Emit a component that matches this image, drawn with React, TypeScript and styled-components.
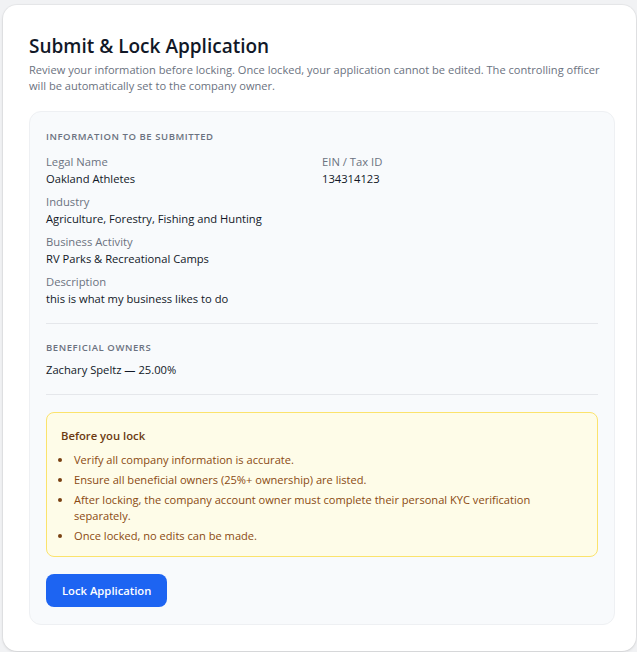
import React from 'react'
import styled, { createGlobalStyle } from 'styled-components'

const GlobalStyle = createGlobalStyle`
  html, body { margin: 0; padding: 0; background: #f1f2f4; }
  body { font-family: "Open Sans", "Noto Sans", Arial, sans-serif; color: #111827; }
  * { box-sizing: border-box; }
`

const Page = styled.div`
  padding: 5px 1px 2px 3px;
`

const Card = styled.section`
  background: #fff;
  border-radius: 14px;
  box-shadow: 0 1px 3px rgba(0,0,0,0.12), 0 0 0 1px rgba(0,0,0,0.03);
  padding: 27px 21px 25px 26px;
  min-height: 646px;
`

const Title = styled.h1`
  margin: 0;
  font-size: 19px;
  line-height: 28px;
  font-weight: 600;
  color: #111827;
`

const Subtitle = styled.p`
  margin: 2px 0 17px;
  font-size: 11.1px;
  line-height: 16px;
  color: #6b7280;
`

const Panel = styled.div`
  background: #f8fafc;
  border: 1px solid #eef0f3;
  border-radius: 12px;
  padding: 18px 16px 17px;
`

const SectionLabel = styled.div<{ $gap?: number }>`
  font-size: 9.5px;
  line-height: 14px;
  font-weight: 600;
  letter-spacing: 0.06em;
  text-transform: uppercase;
  color: #6b7280;
  margin-bottom: ${(p) => p.$gap ?? 9}px;
`

const FieldGrid = styled.div`
  display: grid;
  grid-template-columns: 1fr 1fr;
  row-gap: 6px;
`

const Field = styled.div<{ $wide?: boolean }>`
  grid-column: ${(p) => (p.$wide ? '1 / -1' : 'auto')};
`

const FieldLabel = styled.div`
  font-size: 11.25px;
  line-height: 17px;
  color: #6b7280;
`

const FieldValue = styled.div`
  font-size: 11.2px;
  line-height: 17px;
  color: #111827;
`

const Divider = styled.hr`
  border: none;
  border-top: 1px solid #e5e7eb;
  margin: 16px 0 17px;
`

const OwnerRow = styled.div`
  font-size: 11.2px;
  line-height: 17px;
  color: #111827;
`

const Notice = styled.div`
  background: #fefce8;
  border: 1px solid #fbe36c;
  border-radius: 8px;
  padding: 14px 14px 12px;
  margin-top: 17px;
`

const NoticeTitle = styled.div`
  font-size: 11.25px;
  line-height: 17px;
  font-weight: 600;
  color: #6b3a12;
  margin-bottom: 8px;
`

const NoticeList = styled.ul`
  margin: 0 0 0 -3px;
  padding: 0;
  list-style: none;
  font-size: 11.1px;
  line-height: 16px;
  color: #8a4a12;
`

const NoticeItem = styled.li`
  display: flex;
  margin-bottom: 4px;

  &:last-child { margin-bottom: 0; }

  &::before {
    content: '';
    flex: none;
    width: 4px;
    height: 4px;
    margin: 6px 12px 0 0;
    border-radius: 50%;
    background: #7a4212;
  }
`

const LockButton = styled.button`
  margin-top: 17px;
  height: 33px;
  padding: 0 16px;
  border: none;
  border-radius: 8px;
  background: #1d64f2;
  color: #fff;
  font-family: inherit;
  font-size: 11.25px;
  font-weight: 600;
  cursor: pointer;
`

const fields = [
  { label: 'Legal Name', value: 'Oakland Athletes' },
  { label: 'EIN / Tax ID', value: '134314123' },
  { label: 'Industry', value: 'Agriculture, Forestry, Fishing and Hunting', wide: true },
  { label: 'Business Activity', value: 'RV Parks & Recreational Camps', wide: true },
  { label: 'Description', value: 'this is what my business likes to do', wide: true },
]

const notes = [
  'Verify all company information is accurate.',
  'Ensure all beneficial owners (25%+ ownership) are listed.',
  'After locking, the company account owner must complete their personal KYC verification separately.',
  'Once locked, no edits can be made.',
]

export default function App() {
  return (
    <Page>
      <GlobalStyle />
      <Card>
        <Title>Submit &amp; Lock Application</Title>
        <Subtitle>
          Review your information before locking. Once locked, your application cannot be edited. The controlling
          officer will be automatically set to the company owner.
        </Subtitle>
        <Panel>
          <SectionLabel>Information to be submitted</SectionLabel>
          <FieldGrid>
            {fields.map((f) => (
              <Field key={f.label} $wide={f.wide}>
                <FieldLabel>{f.label}</FieldLabel>
                <FieldValue>{f.value}</FieldValue>
              </Field>
            ))}
          </FieldGrid>
          <Divider />
          <SectionLabel $gap={6}>Beneficial owners</SectionLabel>
          <OwnerRow>Zachary Speltz — 25.00%</OwnerRow>
          <Divider />
          <Notice>
            <NoticeTitle>Before you lock</NoticeTitle>
            <NoticeList>
              {notes.map((n) => (
                <NoticeItem key={n}>{n}</NoticeItem>
              ))}
            </NoticeList>
          </Notice>
          <LockButton>Lock Application</LockButton>
        </Panel>
      </Card>
    </Page>
  )
}
